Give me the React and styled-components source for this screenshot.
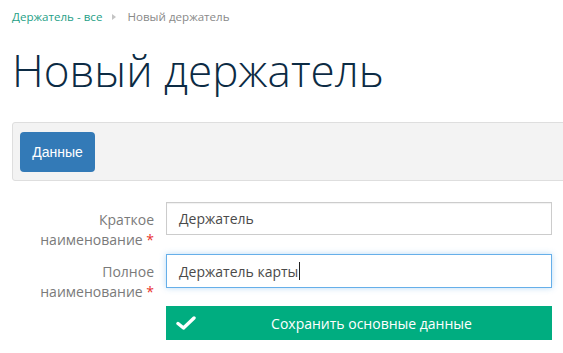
import styled, { createGlobalStyle } from "styled-components";

const Global = createGlobalStyle`
  body {
    margin: 0;
    background: #fff;
    font-family: "Open Sans", "Liberation Sans", sans-serif;
  }
`

const Page = styled.div`
  padding: 0 0 0 12px;
  overflow: hidden;
`

const Crumbs = styled.div`
  display: flex;
  align-items: center;
  height: 17px;
  padding-top: 8px;
  font-size: 11.6px;
  color: #8a8a8a;
  a {
    color: #1f9f87;
    text-decoration: none;
  }
`

const Sep = styled.span`
  width: 0;
  height: 0;
  border-top: 3px solid transparent;
  border-bottom: 3px solid transparent;
  border-left: 4px solid #c4c4c4;
  margin: 0 11px 0 10px;
`

const Title = styled.h1`
  margin: 15px 0 0 0;
  font-size: 44px;
  font-weight: 300;
  line-height: 60px;
  color: #0c2b44;
`

const Toolbar = styled.div`
  margin-top: 22px;
  margin-right: -4px;
  height: 57px;
  background: #f3f3f3;
  border: 1px solid #dedede;
  border-radius: 3px;
  display: flex;
  align-items: center;
  padding-left: 7px;
`

const TabButton = styled.button`
  width: 75px;
  height: 40px;
  border: none;
  border-radius: 4px;
  background: #337ab7;
  color: #fff;
  font-family: "Liberation Sans", Arial, sans-serif;
  font-size: 14px;
  cursor: pointer;
`

const Form = styled.div`
  margin-top: 21px;
  display: grid;
  grid-template-columns: 142px 386px;
  grid-template-rows: 34px 34px 34px;
  column-gap: 12px;
  row-gap: 18px;
`

const Label = styled.div`
  text-align: right;
  font-size: 14px;
  line-height: 20px;
  color: #7a7a7a;
  padding-top: 8px;
  white-space: nowrap;
  span {
    color: #e8312c;
  }
`

const Input = styled.div`
  height: ${p => (p.$focus ? "34px" : "33px")};
  box-sizing: border-box;
  border: 1px solid ${p => (p.$focus ? "#66afe9" : "#cccccc")};
  box-shadow: ${p => (p.$focus ? "0 0 6px rgba(102,175,233,0.45)" : "inset 0 1px 1px rgba(0,0,0,0.06)")};
  display: flex;
  align-items: center;
  padding-left: 12px;
  font-size: 14px;
  color: #4a4a4a;
`

const Caret = styled.span`
  display: inline-block;
  width: 1px;
  height: 18px;
  background: #222;
  margin-left: 1px;
`

const SaveButton = styled.button`
  grid-column: 2;
  height: 34px;
  border: none;
  background: #00ad80;
  color: #fff;
  font-family: "Open Sans", sans-serif;
  font-size: 14px;
  display: flex;
  align-items: center;
  position: relative;
  justify-content: center;
  padding: 0 0 0 25px;
  cursor: pointer;
  svg {
    position: absolute;
    left: 10px;
    top: 10px;
  }
`

export default function App() {
  return (
    <Page>
      <Global />
      <Crumbs>
        <a href="#">Держатель - все</a>
        <Sep />
        <span>Новый держатель</span>
      </Crumbs>
      <Title>Новый держатель</Title>
      <Toolbar>
        <TabButton>Данные</TabButton>
      </Toolbar>
      <Form>
        <Label>Краткое<br />наименование <span>*</span></Label>
        <Input>Держатель</Input>
        <Label>Полное<br />наименование <span>*</span></Label>
        <Input $focus>Держатель карты<Caret /></Input>
        <div />
        <SaveButton>
          <svg width="20" height="14" viewBox="0 0 20 14">
            <path d="M2 7.5 L7.5 12 L18 2" fill="none" stroke="#fff" strokeWidth="3.4" strokeLinecap="round" strokeLinejoin="round" />
          </svg>
          Сохранить основные данные
        </SaveButton>
      </Form>
    </Page>
  )
}
